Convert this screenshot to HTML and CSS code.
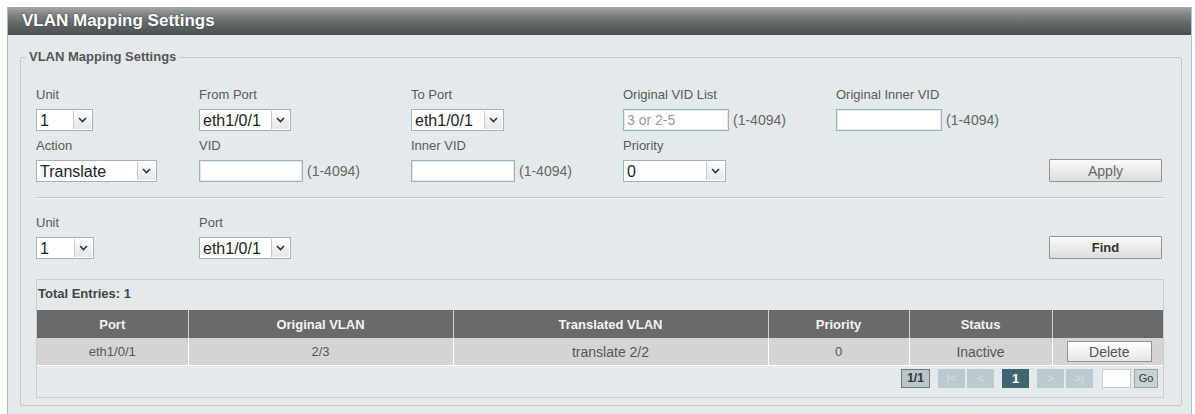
FILE: index.html
```html
<!DOCTYPE html>
<html lang="en">
<head>
    <meta charset="UTF-8">
    <title>VLAN Mapping Settings</title>
    <link rel="stylesheet" href="styles.css">
</head>
<body>

    <div class="panel">
        <div class="panel-title">VLAN Mapping Settings</div>
        <div class="panel-body">
            <fieldset class="box">
                <legend>VLAN Mapping Settings</legend>

                <div class="form-grid">
                    <div class="field">
                        <label>Unit</label>
                        <span class="dropdown w-unit"><select><option>1</option></select><span class="arrow"><svg width="9" height="6" viewBox="0 0 9 6"><path d="M1 1 L4.5 4.5 L8 1" fill="none" stroke="#333" stroke-width="1.6"/></svg></span></span>
                    </div>
                    <div class="field">
                        <label>From Port</label>
                        <span class="dropdown w-port"><select><option>eth1/0/1</option></select><span class="arrow"><svg width="9" height="6" viewBox="0 0 9 6"><path d="M1 1 L4.5 4.5 L8 1" fill="none" stroke="#333" stroke-width="1.6"/></svg></span></span>
                    </div>
                    <div class="field">
                        <label>To Port</label>
                        <span class="dropdown w-port2"><select><option>eth1/0/1</option></select><span class="arrow"><svg width="9" height="6" viewBox="0 0 9 6"><path d="M1 1 L4.5 4.5 L8 1" fill="none" stroke="#333" stroke-width="1.6"/></svg></span></span>
                    </div>
                    <div class="field">
                        <label>Original VID List</label>
                        <span class="inline"><input type="text" class="txt w-wide" placeholder="3 or 2-5"><span class="range">(1-4094)</span></span>
                    </div>
                    <div class="field">
                        <label>Original Inner VID</label>
                        <span class="inline"><input type="text" class="txt w-wide"><span class="range">(1-4094)</span></span>
                    </div>
                    <div class="field"></div>

                    <div class="field">
                        <label>Action</label>
                        <span class="dropdown w-action"><select><option>Translate</option></select><span class="arrow"><svg width="9" height="6" viewBox="0 0 9 6"><path d="M1 1 L4.5 4.5 L8 1" fill="none" stroke="#333" stroke-width="1.6"/></svg></span></span>
                    </div>
                    <div class="field">
                        <label>VID</label>
                        <span class="inline"><input type="text" class="txt w-mid"><span class="range">(1-4094)</span></span>
                    </div>
                    <div class="field">
                        <label>Inner VID</label>
                        <span class="inline"><input type="text" class="txt w-mid"><span class="range">(1-4094)</span></span>
                    </div>
                    <div class="field">
                        <label>Priority</label>
                        <span class="dropdown w-prio"><select><option>0</option></select><span class="arrow"><svg width="9" height="6" viewBox="0 0 9 6"><path d="M1 1 L4.5 4.5 L8 1" fill="none" stroke="#333" stroke-width="1.6"/></svg></span></span>
                    </div>
                    <div class="field"></div>
                    <div class="field end">
                        <button class="btn">Apply</button>
                    </div>
                </div>

                <div class="sep"></div>

                <div class="form-grid">
                    <div class="field">
                        <label>Unit</label>
                        <span class="dropdown w-unit2"><select><option>1</option></select><span class="arrow"><svg width="9" height="6" viewBox="0 0 9 6"><path d="M1 1 L4.5 4.5 L8 1" fill="none" stroke="#333" stroke-width="1.6"/></svg></span></span>
                    </div>
                    <div class="field">
                        <label>Port</label>
                        <span class="dropdown w-port"><select><option>eth1/0/1</option></select><span class="arrow"><svg width="9" height="6" viewBox="0 0 9 6"><path d="M1 1 L4.5 4.5 L8 1" fill="none" stroke="#333" stroke-width="1.6"/></svg></span></span>
                    </div>
                    <div class="field"></div>
                    <div class="field"></div>
                    <div class="field"></div>
                    <div class="field end">
                        <button class="btn btn-find">Find</button>
                    </div>
                </div>

                <div class="entries">
                    <div class="total">Total Entries: 1</div>
                    <table class="list">
                        <colgroup>
                            <col style="width:151px">
                            <col style="width:265px">
                            <col style="width:315px">
                            <col style="width:141px">
                            <col style="width:143px">
                            <col style="width:111px">
                        </colgroup>
                        <thead>
                            <tr>
                                <th>Port</th>
                                <th>Original VLAN</th>
                                <th>Translated VLAN</th>
                                <th>Priority</th>
                                <th>Status</th>
                                <th></th>
                            </tr>
                        </thead>
                        <tbody>
                            <tr>
                                <td>eth1/0/1</td>
                                <td>2/3</td>
                                <td class="big">translate 2/2</td>
                                <td>0</td>
                                <td class="big">Inactive</td>
                                <td><button class="btn-delete">Delete</button></td>
                            </tr>
                        </tbody>
                    </table>
                    <div class="pager">
                        <span class="page-count">1/1</span>
                        <span class="pg-group">
                            <span class="pg off">|&lt;</span>
                            <span class="pg off">&lt;</span>
                        </span>
                        <span class="pg current">1</span>
                        <span class="pg-group">
                            <span class="pg off">&gt;</span>
                            <span class="pg off">&gt;|</span>
                        </span>
                        <input type="text" class="pg-input">
                        <span class="pg-go">Go</span>
                    </div>
                </div>
            </fieldset>
        </div>
    </div>

</body>
</html>
```

FILE: styles.css
```css
body {
    margin: 0;
    background: #ffffff;
    font-family: "Liberation Sans", Arial, sans-serif;
    color: #555;
}

.panel {
    margin: 7px 0 0 7px;
    width: 1185px;
    height: 420px;
    box-sizing: border-box;
    border-left: 1px solid #9fc0c5;
    border-right: 1px solid #a9c6d4;
    background: #e4e9eb;
}

.panel-title {
    height: 28px;
    line-height: 28px;
    padding-left: 14px;
    font-size: 17px;
    font-weight: bold;
    color: #ffffff;
    text-shadow: 0 0 2px #3a3d3d;
    background: linear-gradient(to bottom, #a4a8a9 0%, #7c8081 30%, #5a5f5f 70%, #4c5151 100%);
}

.panel-body {
    padding: 14px 9px 0 12px;
}

.box {
    margin: 0;
    padding: 22px 17px 7px 15px;
    border: 1px solid #c3c9cc;
    border-radius: 2px;
}

.box legend {
    padding: 0 3px;
    margin-left: -10px;
    font-size: 13px;
    line-height: 16px;
    font-weight: bold;
    color: #555;
}

.form-grid {
    display: grid;
    grid-template-columns: 163px 212px 212px 213px 1fr 115px;
    row-gap: 7px;
}

.field {
    display: flex;
    flex-direction: column;
    align-items: flex-start;
}

.field.end {
    justify-content: flex-end;
}

.field label {
    font-size: 13px;
    line-height: 16px;
    margin-bottom: 6px;
    color: #5a5a5a;
}

.inline {
    display: flex;
    align-items: center;
}

.range {
    margin-left: 4px;
    font-size: 14px;
    color: #666;
}

.txt {
    height: 22px;
    box-sizing: border-box;
    border: 1px solid #9fb0bf;
    box-shadow: inset 0 0 0 1px #dfe7ee;
    background: #ffffff;
    padding: 0 3px;
    font-family: "Liberation Sans", Arial, sans-serif;
    font-size: 14px;
    color: #333;
}

.txt::placeholder {
    color: #999;
}

.w-wide { width: 106px; }
.w-mid { width: 104px; }

.dropdown {
    position: relative;
    display: inline-block;
    height: 22px;
}

.dropdown select {
    appearance: none;
    -webkit-appearance: none;
    width: 100%;
    height: 22px;
    box-sizing: border-box;
    border: 1px solid #a3b2c0;
    border-radius: 0;
    background: #ffffff;
    padding: 0 0 0 3px;
    font-family: "Liberation Sans", Arial, sans-serif;
    font-size: 16px;
    color: #222;
}

/* arrow box drawn over the right end of the select */
.dropdown .arrow {
    position: absolute;
    top: 2px;
    right: 2px;
    bottom: 2px;
    width: 17px;
    border-left: 1px solid #c2cbd3;
    background: linear-gradient(to bottom, #fbfcfc, #e3e8eb);
    display: flex;
    align-items: center;
    justify-content: center;
    pointer-events: none;
}

.w-unit { width: 57px; }
.w-unit2 { width: 58px; }
.w-port { width: 92px; }
.w-port2 { width: 93px; }
.w-action { width: 121px; }
.w-prio { width: 103px; }

.btn {
    width: 113px;
    height: 23px;
    border: 1px solid #8f9498;
    border-radius: 1px;
    background: linear-gradient(to bottom, #fafafa, #dcdddd);
    font-family: "Liberation Sans", Arial, sans-serif;
    font-size: 14px;
    color: #666;
}

.btn-find {
    color: #333;
    font-weight: bold;
    font-size: 13px;
}

.sep {
    margin: 15px 0 16px;
    height: 0;
    border-top: 1px solid #c3c8cb;
    border-bottom: 1px solid #f2f4f5;
}

.entries {
    margin-top: 20px;
    border: 1px solid #c8cdd0;
    padding: 6px 0 9px;
}

.total {
    font-size: 13px;
    line-height: 16px;
    font-weight: bold;
    color: #444;
    padding-left: 1px;
    margin-bottom: 8px;
}

.list {
    width: 1126px;
    border-collapse: collapse;
    table-layout: fixed;
}

.list th {
    height: 28px;
    padding: 0;
    background: #6a6a6a;
    color: #f4f4f4;
    font-size: 13px;
    font-weight: bold;
    border-left: 1px solid #d0d0d0;
}

.list td {
    height: 27px;
    padding: 0;
    background: #d4d4d4;
    color: #555;
    font-size: 13px;
    text-align: center;
    border-left: 1px solid #ffffff;
    border-bottom: 1px solid #ffffff;
}

.list th:first-child,
.list td:first-child {
    border-left: none;
}

.list td.big {
    font-size: 14px;
}

.btn-delete {
    width: 85px;
    height: 21px;
    margin-left: 3px;
    border: 1px solid #8f9498;
    background: linear-gradient(to bottom, #ffffff, #e6e6e6);
    font-family: "Liberation Sans", Arial, sans-serif;
    font-size: 14px;
    color: #555;
}

.pager {
    display: flex;
    justify-content: flex-end;
    align-items: center;
    gap: 8px;
    margin-top: 3px;
    padding-right: 5px;
}

.page-count {
    width: 27px;
    height: 17px;
    line-height: 17px;
    text-align: center;
    border: 1px solid #777;
    background: #b9c5c8;
    font-size: 12px;
    font-weight: bold;
    color: #333;
}

.pg-group {
    display: flex;
    gap: 2px;
}

.pg {
    width: 27px;
    height: 19px;
    line-height: 19px;
    text-align: center;
    font-size: 11px;
}

.pg.off {
    background: #b9cbcf;
    color: #d5e1e3;
}

.pg.current {
    background: #3d6670;
    color: #ffffff;
    font-weight: bold;
    font-size: 13px;
}

.pg-input {
    width: 29px;
    height: 19px;
    box-sizing: border-box;
    margin-left: 1px;
    border: 1px solid #c4cdd2;
    background: #ffffff;
}

.pg-go {
    width: 22px;
    height: 17px;
    line-height: 17px;
    margin-left: -5px;
    text-align: center;
    border: 1px solid #9aa5a8;
    background: #c7d2d4;
    font-size: 11px;
    color: #333;
}
```
